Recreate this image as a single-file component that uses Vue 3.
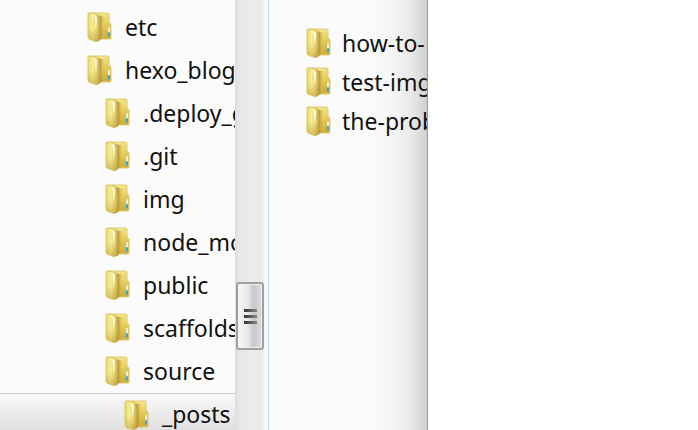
<script setup>
import { ref } from 'vue'

const folders = [
  { name: 'etc', depth: 0 },
  { name: 'hexo_blog', depth: 0 },
  { name: '.deploy_git', depth: 1 },
  { name: '.git', depth: 1 },
  { name: 'img', depth: 1 },
  { name: 'node_modules', depth: 1 },
  { name: 'public', depth: 1 },
  { name: 'scaffolds', depth: 1 },
  { name: 'source', depth: 1 },
  { name: '_posts', depth: 2 },
]
const files = ['how-to-', 'test-img', 'the-problem']
const selected = ref('_posts')
</script>

<template>
  <main class="page">
    <div class="explorer">
      <nav class="tree" aria-label="Folders">
        <button
          v-for="folder in folders"
          :key="folder.name"
          type="button"
          class="row"
          :class="['depth-' + folder.depth, { selected: folder.name === selected }]"
          @click="selected = folder.name"
        >
          <svg class="icon" viewBox="0 0 25 31" aria-hidden="true"><use href="#folder" /></svg>
          <span class="name">{{ folder.name }}</span>
        </button>
      </nav>
      <div class="track">
        <div class="thumb"><i></i><i></i><i></i></div>
      </div>
      <section class="files" aria-label="Files">
        <button v-for="file in files" :key="file" type="button" class="file">
          <svg class="icon" viewBox="0 0 25 31" aria-hidden="true"><use href="#folder" /></svg>
          <span class="name">{{ file }}</span>
        </button>
      </section>
    </div>
    <svg class="defs" aria-hidden="true">
      <defs>
        <linearGradient id="back" x1="0" y1="0" x2="0.3" y2="1">
          <stop offset="0" stop-color="#f7efa0" />
          <stop offset="0.5" stop-color="#ead566" />
          <stop offset="1" stop-color="#d3af38" />
        </linearGradient>
        <linearGradient id="front" x1="0" y1="0" x2="1" y2="0">
          <stop offset="0" stop-color="#e8d76c" />
          <stop offset="0.35" stop-color="#f5ee94" />
          <stop offset="0.65" stop-color="#e6d674" />
          <stop offset="1" stop-color="#b8983c" />
        </linearGradient>
        <linearGradient id="spine" x1="0" y1="0" x2="1" y2="0">
          <stop offset="0" stop-color="#b5953a" />
          <stop offset="1" stop-color="#e0c75c" stop-opacity="0" />
        </linearGradient>
        <linearGradient id="shade" x1="0" y1="0" x2="0" y2="1">
          <stop offset="0.5" stop-color="#b38c2b" stop-opacity="0" />
          <stop offset="1" stop-color="#b38c2b" stop-opacity="0.5" />
        </linearGradient>
        <symbol id="folder" viewBox="0 0 25 31">
          <path d="M3 1H21Q22 1 22 2V10L24 12V26Q24 27 23 27H12L3 26Z" fill="url(#back)" stroke="#e0cb74" stroke-width="1" />
          <path d="M13 4H18V27H13Z" fill="url(#spine)" />
          <path d="M1 2Q1 1 2 1L10 2Q14 3 14 6V26Q14 28 12 29L9 30L3 28Q1 27 1 26Z" fill="url(#front)" />
          <path d="M1 2L14 6V26L12 29L9 30L3 28L1 26Z" fill="url(#shade)" />
          <path d="M1 26V2Q1 1 2 1L10 2" fill="none" stroke="#dcc868" stroke-width="1" />
          <path d="M6 3Q10 3 10 7L9 18Q8 13 8 8Q8 5 6 3Z" fill="#fffce8" opacity="0.9" />
          <rect x="21" y="15" width="2" height="10" rx="1" fill="#f4f2d2" />
          <rect x="21" y="20" width="2" height="5" rx="1" fill="#3fa6be" />
        </symbol>
      </defs>
    </svg>
  </main>
</template>

<style>
body {
  background: #fff;
}
</style>

<style scoped>
.page {
  display: grid;
  grid-template-columns: 428fr 270fr;
  height: 100vh;
  overflow: hidden;
  font-family: "Noto Sans", "Open Sans", sans-serif;
  font-size: 23px;
  color: #111;
}
.explorer {
  display: flex;
  min-width: 0;
  min-height: 0;
  overflow: hidden;
  background: #fbfbfb;
  border-right: 1px solid #9b9b9b;
}
.tree {
  flex: 0 0 235px;
  padding-top: 6px;
  overflow: hidden;
}
.row,
.file {
  display: flex;
  align-items: center;
  gap: 12px;
  width: 100%;
  border: 0;
  background: none;
  font: inherit;
  color: inherit;
  text-align: left;
  white-space: nowrap;
  overflow: hidden;
}
.row {
  height: 43px;
  padding: 0 0 0 87px;
}
.depth-1 {
  padding-left: 105px;
}
.depth-2 {
  padding-left: 124px;
}
.selected {
  border-top: 1px solid #c9c9c9;
  background: linear-gradient(#f9f9f9, #dcdcdc);
}
.icon {
  flex: none;
  width: 25px;
  height: 31px;
}
.name {
  line-height: 30px;
  padding-bottom: 2px;
}
.track {
  flex: 0 0 30px;
  box-sizing: border-box;
  padding: 282px 1px 0;
  background: linear-gradient(90deg, #dedede, #e8e8e8 5px, #ececec 20px, #ebebeb 27px, #f6f6f6);
}
.thumb {
  display: flex;
  flex-direction: column;
  align-items: center;
  justify-content: center;
  gap: 3px;
  box-sizing: border-box;
  height: 68px;
  border: 2px solid #a0a0a2;
  border-radius: 3px;
  background: linear-gradient(90deg, #f8f8f8, #e9e9eb 40%, #c9c9ce 65%, #dcdcdf);
  box-shadow: inset 0 0 0 1px #f0f0f0;
}
.thumb i {
  width: 13px;
  height: 3px;
  background: linear-gradient(90deg, #333, #888);
}
.files {
  flex: 1;
  min-width: 0;
  margin-left: 3px;
  padding-top: 24px;
  overflow: hidden;
  border-left: 1px solid #c9def4;
  background: linear-gradient(90deg, #fbfbfb 64%, #f5f5f5 78%, #e9e9e9 90%, #d0d0d0);
}
.row {
  gap: 13px;
}
.file {
  height: 39px;
  padding: 0 0 0 37px;
  gap: 11px;
}
.defs {
  width: 0;
  height: 0;
}
</style>
